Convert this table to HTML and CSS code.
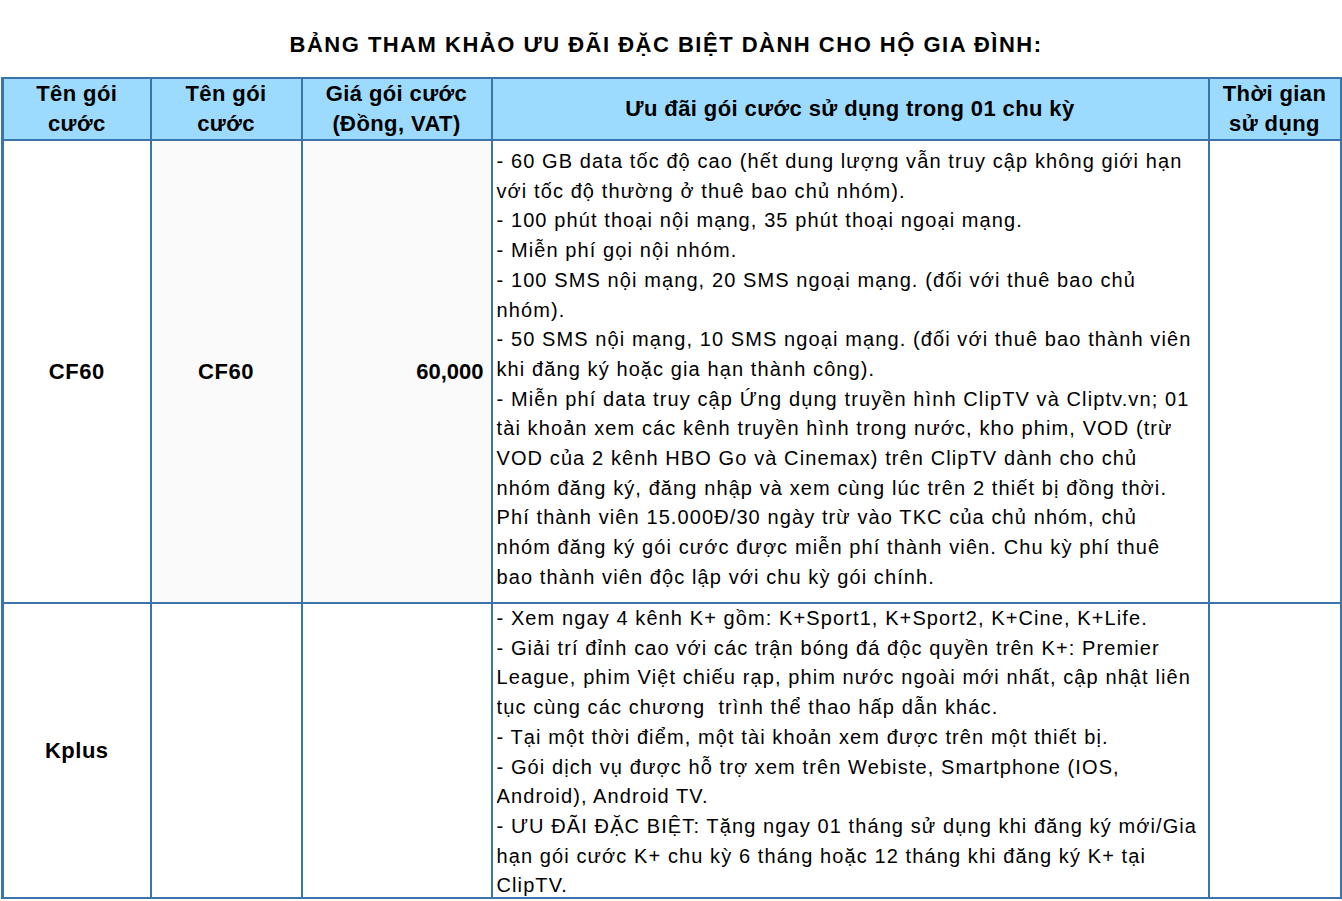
FILE: index.html
```html
<!DOCTYPE html>
<html lang="vi">
<head>
<meta charset="utf-8">
<title>Bảng tham khảo ưu đãi</title>
<link rel="stylesheet" href="styles.css">
</head>
<body>
<h1 class="title">BẢNG THAM KHẢO ƯU ĐÃI ĐẶC BIỆT DÀNH CHO HỘ GIA ĐÌNH:</h1>
<table class="grid">
  <colgroup>
    <col class="c1"><col class="c2"><col class="c3"><col class="c4"><col class="c5">
  </colgroup>
  <thead>
    <tr class="head">
      <th>Tên gói<br>cước</th>
      <th>Tên gói<br>cước</th>
      <th>Giá gói cước<br>(Đồng, VAT)</th>
      <th>Ưu đãi gói cước sử dụng trong 01 chu kỳ</th>
      <th>Thời gian<br>sử dụng</th>
    </tr>
  </thead>
  <tbody>
    <tr class="r1">
      <td class="name">CF60</td>
      <td class="name shade">CF60</td>
      <td class="price shade">60,000</td>
      <td class="desc d1">- 60 GB data tốc độ cao (hết dung lượng vẫn truy cập không giới hạn<br>với tốc độ thường ở thuê bao chủ nhóm).<br>- 100 phút thoại nội mạng, 35 phút thoại ngoại mạng.<br>- Miễn phí gọi nội nhóm.<br>- 100 SMS nội mạng, 20 SMS ngoại mạng. (đối với thuê bao chủ<br>nhóm).<br>- 50 SMS nội mạng, 10 SMS ngoại mạng. (đối với thuê bao thành viên<br>khi đăng ký hoặc gia hạn thành công).<br>- Miễn phí data truy cập Ứng dụng truyền hình ClipTV và Cliptv.vn; 01<br>tài khoản xem các kênh truyền hình trong nước, kho phim, VOD (trừ<br>VOD của 2 kênh HBO Go và Cinemax) trên ClipTV dành cho chủ<br>nhóm đăng ký, đăng nhập và xem cùng lúc trên 2 thiết bị đồng thời.<br>Phí thành viên 15.000Đ/30 ngày trừ vào TKC của chủ nhóm, chủ<br>nhóm đăng ký gói cước được miễn phí thành viên. Chu kỳ phí thuê<br>bao thành viên độc lập với chu kỳ gói chính.</td>
      <td></td>
    </tr>
    <tr class="r2">
      <td class="name">Kplus</td>
      <td></td>
      <td></td>
      <td class="desc d2"><div class="clip">- Xem ngay 4 kênh K+ gồm: K+Sport1, K+Sport2, K+Cine, K+Life.<br>- Giải trí đỉnh cao với các trận bóng đá độc quyền trên K+: Premier<br>League, phim Việt chiếu rạp, phim nước ngoài mới nhất, cập nhật liên<br>tục cùng các chương&nbsp; trình thể thao hấp dẫn khác.<br>- Tại một thời điểm, một tài khoản xem được trên một thiết bị.<br>- Gói dịch vụ được hỗ trợ xem trên Webiste, Smartphone (IOS,<br>Android), Android TV.<br>- ƯU ĐÃI ĐẶC BIỆT: Tặng ngay 01 tháng sử dụng khi đăng ký mới/Gia<br>hạn gói cước K+ chu kỳ 6 tháng hoặc 12 tháng khi đăng ký K+ tại<br>ClipTV.</div></td>
      <td></td>
    </tr>
  </tbody>
</table>
</body>
</html>
```

FILE: styles.css
```css
html, body {
  margin: 0;
  padding: 0;
  background: #ffffff;
}
body {
  font-family: "Liberation Sans", Arial, sans-serif;
  color: #000000;
  overflow: hidden;
}
.title {
  margin: 0;
  padding-top: 31px;
  height: 77px;
  box-sizing: border-box;
  text-align: center;
  font-size: 22px;
  font-weight: bold;
  line-height: 28px;
  letter-spacing: 1.5px;
  padding-right: 10px;
}
.grid {
  margin-left: 1px;
  width: 1338px;
  border-collapse: collapse;
  table-layout: fixed;
}
.c1 { width: 148px; }
.c2 { width: 151px; }
.c3 { width: 190px; }
.c4 { width: 717px; }
.c5 { width: 132px; }
.grid th, .grid td {
  border: 2px solid #3b74ad;
  padding: 0;
}
.grid tr > :first-child { border-left-width: 3px; }
.head th {
  background: #9cdbfd;
  height: 60px;
  font-size: 22px;
  font-weight: bold;
  line-height: 30px;
  letter-spacing: 0.4px;
  text-align: center;
  vertical-align: middle;
}
.r1 td { height: 455px; }
.r2 td { height: 293px; }
.name {
  text-align: center;
  font-weight: bold;
  font-size: 22px;
  letter-spacing: 0.5px;
  vertical-align: middle;
}
.shade { background: #fafafa; }
.price {
  text-align: right;
  font-weight: bold;
  font-size: 22px;
  vertical-align: middle;
  padding-right: 7px !important;
}
.desc {
  vertical-align: top;
  font-size: 20px;
  line-height: 29.7px;
  letter-spacing: 1.1px;
  padding-left: 4px !important;
  white-space: nowrap;
  overflow: hidden;
}
.d1 { padding-top: 6px !important; }
.d2 { padding-top: 0 !important; }
.clip {
  height: 293px;
  overflow: hidden;
}
```
